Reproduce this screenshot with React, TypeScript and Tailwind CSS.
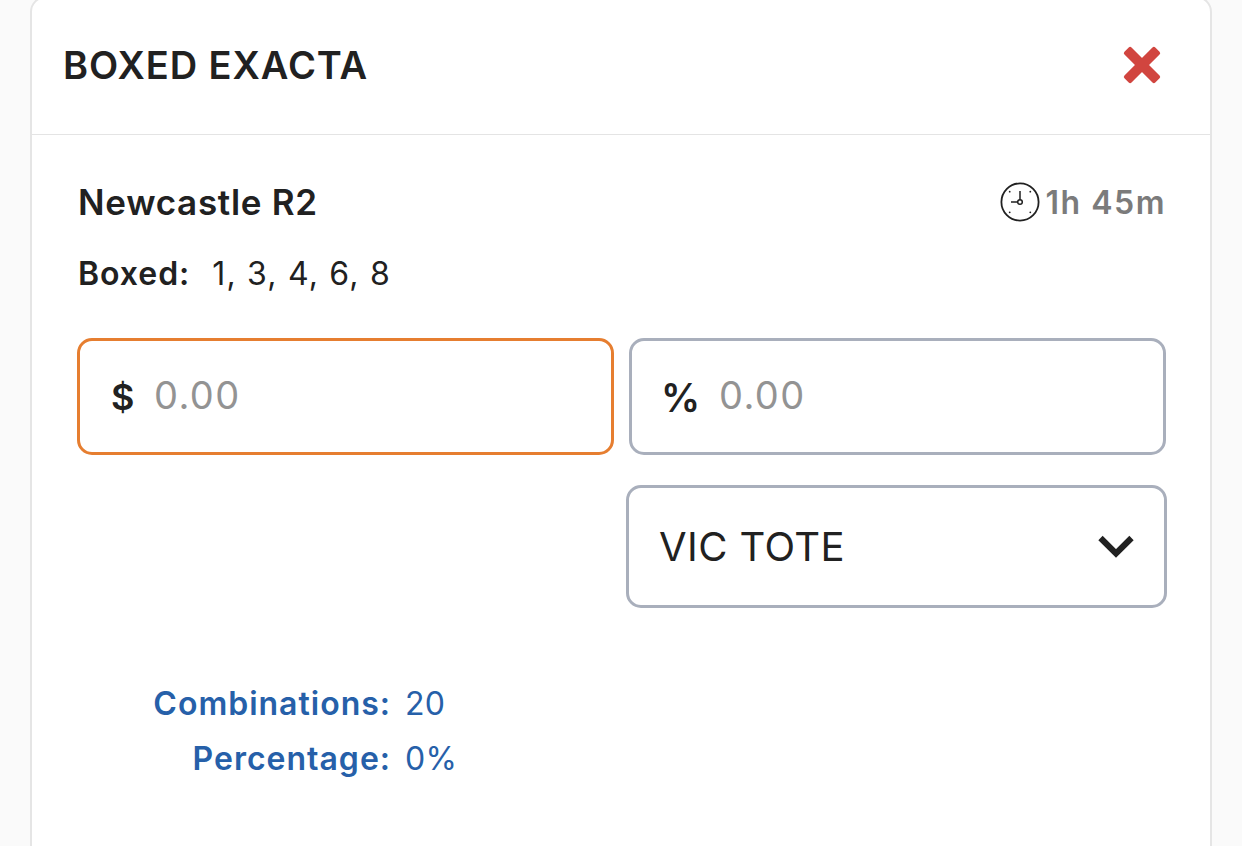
import clsx from 'clsx';
import type { ReactNode } from 'react';

const selections = [1, 3, 4, 6, 8];

function CloseIcon() {
  return (
    <svg width="38" height="38" viewBox="-19 -19 38 38" fill="#d1453f">
      <rect x="-21.8" y="-5" width="43.6" height="10" rx="2" transform="rotate(45)" />
      <rect x="-21.8" y="-5" width="43.6" height="10" rx="2" transform="rotate(-45)" />
    </svg>
  );
}

function ClockIcon() {
  return (
    <svg width="40" height="40" viewBox="-20 -20 40 40" fill="none" stroke="#212121">
      <circle r="18.6" strokeWidth="1.8" />
      <circle r="2.3" strokeWidth="1.5" />
      <path d="M0 -2.3V-11M-2.3 0H-9" strokeWidth="1.5" />
      <g fill="#212121" stroke="none">
        <circle cx="-10.3" cy="-10.3" r="0.9" />
        <circle cx="10.3" cy="-10.3" r="0.9" />
        <circle cx="-10.3" cy="10.3" r="0.9" />
        <circle cx="10.3" cy="10.3" r="0.9" />
      </g>
    </svg>
  );
}

function ChevronIcon() {
  return (
    <svg width="36" height="24" viewBox="-18 0 36 24" fill="none" stroke="#212121">
      <path d="M-15.5 3L0 18.5L15.5 3" strokeWidth="6.1" />
    </svg>
  );
}

function AmountField({ symbol, active }: { symbol: ReactNode; active?: boolean }) {
  return (
    <div
      className={clsx(
        'flex h-[117px] w-[537px] items-center rounded-[15px] border-[3px] pl-[31px]',
        active ? 'border-[#e67e30]' : 'border-[#a9afbc]',
      )}
    >
      {symbol}
      <span className="pb-[3px] text-[38px] leading-[46px] tracking-[1.4px] text-[#939393]">0.00</span>
    </div>
  );
}

function SummaryRow({ label, value }: { label: string; value: string }) {
  return (
    <div className="flex h-[55px] items-center gap-[14px] text-[32px] text-[#2660a9]">
      <span className="w-[314px] text-right font-semibold tracking-[1px]">{label}</span>
      <span className="tracking-[0.3px]">{value}</span>
    </div>
  );
}

export default function App() {
  return (
    <div className="h-[846px] w-[1242px] overflow-hidden bg-[#fafafa] px-[30px] font-['Inter',sans-serif] text-[#212121]">
      <div className="-mt-1 h-[870px] rounded-2xl border-2 border-[#e5e5e5] bg-white">
        <div className="flex h-[137px] items-center justify-between border-b border-[#e4e4e4] pr-[49px] pb-[2px] pl-[31px]">
          <h1 className="text-[38px] font-semibold tracking-[0.95px]">BOXED EXACTA</h1>
          <CloseIcon />
        </div>

        <div className="pt-[43px] pr-[44px] pl-[45px]">
          <div className="flex h-12 items-center justify-between">
            <h2 className="pl-px text-[35px] font-semibold tracking-[0.7px]">Newcastle R2</h2>
            <div className="flex items-center gap-[6px]">
              <ClockIcon />
              <span className="pt-[2px] text-[32px] font-semibold tracking-[1.5px] text-[#7b7b7b]">1h 45m</span>
            </div>
          </div>

          <div className="mt-[24px] flex h-12 items-center gap-[22px] pl-px text-[32px]">
            <span className="font-semibold tracking-[0.95px]">Boxed:</span>
            <span className="tracking-[1.2px]">{selections.join(', ')}</span>
          </div>

          <div className="mt-[40px] flex gap-[15px]">
            <AmountField active symbol={<span className="w-[43px] text-[36px] font-semibold">$</span>} />
            <AmountField
              symbol={<span className="-ml-[2px] w-[58px] pt-[3px] text-[39px] font-semibold">%</span>}
            />
          </div>

          <div className="-mr-px mt-[30px] ml-auto flex h-[123px] w-[541px] items-center justify-between rounded-[15px] border-[3px] border-[#a9afbc] pr-[30px] pl-[30px]">
            <span className="text-[40px] tracking-[0.4px]">VIC TOTE</span>
            <ChevronIcon />
          </div>

          <div className="mt-[68px]">
            <SummaryRow label="Combinations:" value="20" />
            <SummaryRow label="Percentage:" value="0%" />
          </div>
        </div>
      </div>
    </div>
  );
}
